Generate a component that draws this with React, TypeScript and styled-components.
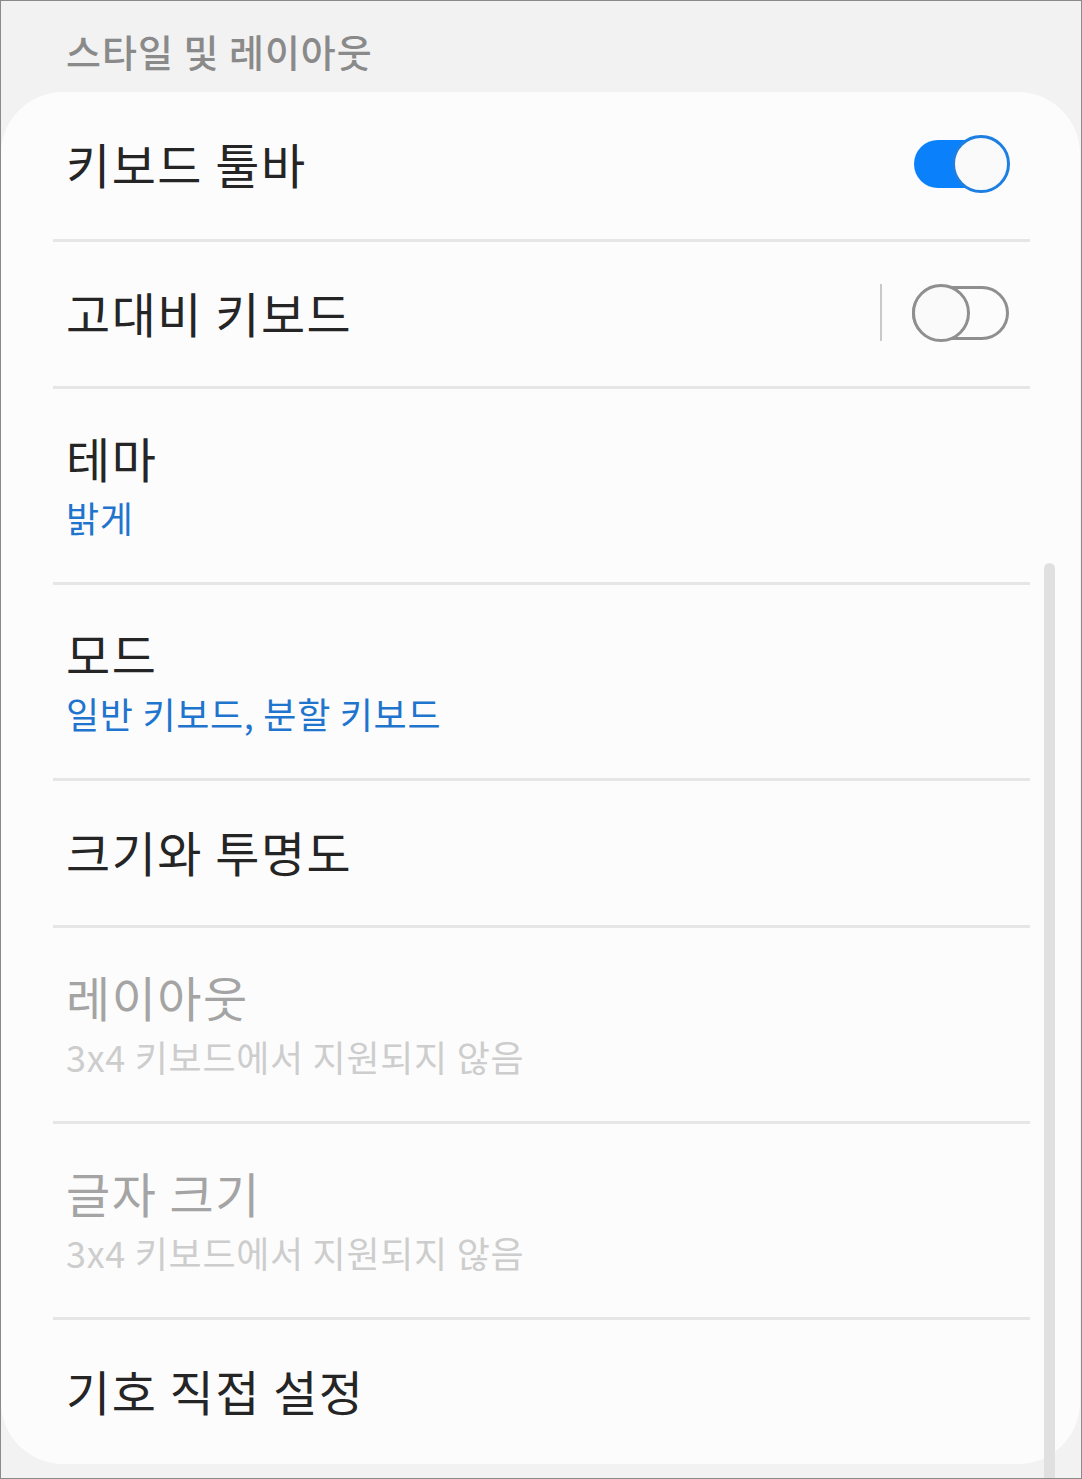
import React from 'react';
import styled, { createGlobalStyle } from 'styled-components';

interface SettingItem {
    title: string;
    subtitle?: string;
    disabled?: boolean;
    toggle?: 'on' | 'off';
    first?: boolean;
}

const items: SettingItem[] = [
    { title: '키보드 툴바', toggle: 'on', first: true },
    { title: '고대비 키보드', toggle: 'off' },
    { title: '테마', subtitle: '밝게' },
    { title: '모드', subtitle: '일반 키보드, 분할 키보드' },
    { title: '크기와 투명도' },
    { title: '레이아웃', subtitle: '3x4 키보드에서 지원되지 않음', disabled: true },
    { title: '글자 크기', subtitle: '3x4 키보드에서 지원되지 않음', disabled: true },
    { title: '기호 직접 설정' }
];

export default function App() {
    return (
        <>
            <GlobalStyle />
            <Screen>
                <SectionHeader>스타일 및 레이아웃</SectionHeader>
                <Card>
                    {items.map((item, i) => (
                        <React.Fragment key={item.title}>
                            {i > 0 && <Divider />}
                            <Row $double={!!item.subtitle} $first={item.first}>
                                <TextBlock>
                                    <Title $disabled={item.disabled}>{item.title}</Title>
                                    {item.subtitle && (
                                        <Subtitle $disabled={item.disabled}>{item.subtitle}</Subtitle>
                                    )}
                                </TextBlock>
                                {item.toggle === 'on' && (
                                    <SwitchOn>
                                        <OnTrack />
                                        <OnThumb />
                                    </SwitchOn>
                                )}
                                {item.toggle === 'off' && (
                                    <SwitchGroup>
                                        <VerticalRule />
                                        <SwitchOff>
                                            <OffThumb />
                                        </SwitchOff>
                                    </SwitchGroup>
                                )}
                            </Row>
                        </React.Fragment>
                    ))}
                </Card>
                <ScrollThumb />
            </Screen>
        </>
    );
}

const GlobalStyle = createGlobalStyle`
    html, body {
        margin: 0;
        padding: 0;
        background: #f2f2f2;
    }
    * {
        box-sizing: border-box;
    }
`;

const Screen = styled.div`
    position: relative;
    width: 1082px;
    height: 1479px;
    overflow: hidden;
    background: #f2f2f2;
    border: 1px solid #8a8a8a;
    font-family: "Noto Sans CJK KR", "Noto Sans", sans-serif;
    display: flex;
    flex-direction: column;
`;

const SectionHeader = styled.div`
    height: 91px;
    padding: 8px 0 0 65px;
    display: flex;
    align-items: center;
    font-size: 38px;
    letter-spacing: 1px;
    font-weight: 500;
    color: #8a8a8a;
`;

const Card = styled.div`
    width: 1079px;
    height: 1372px;
    background: #fcfcfc;
    border-radius: 62px;
    display: flex;
    flex-direction: column;
    overflow: hidden;
`;

const Row = styled.div<{ $double: boolean; $first?: boolean }>`
    height: ${p => (p.$double ? 193 : p.$first ? 147 : 144)}px;
    padding: 0 70px 0 65px;
    display: flex;
    align-items: center;
    justify-content: space-between;
    flex-shrink: 0;
`;

const Divider = styled.div`
    height: 3px;
    margin: 0 50px 0 52px;
    background: #e6e6e6;
    flex-shrink: 0;
`;

const TextBlock = styled.div`
    display: flex;
    flex-direction: column;
    padding-bottom: 5px;
`;

const Title = styled.div<{ $disabled?: boolean }>`
    font-size: 48px;
    letter-spacing: 1.5px;
    line-height: 60px;
    color: ${p => (p.$disabled ? '#a4a4a4' : '#252525')};
    white-space: nowrap;
`;

const Subtitle = styled.div<{ $disabled?: boolean }>`
    margin-top: 8px;
    font-size: 36px;
    letter-spacing: 0.7px;
    line-height: 44px;
    color: ${p => (p.$disabled ? '#cdcdcd' : '#1f74cd')};
    white-space: nowrap;
`;

const SwitchOn = styled.div`
    position: relative;
    width: 96px;
    height: 58px;
    margin-top: -3px;
`;

const OnTrack = styled.div`
    position: absolute;
    left: 0;
    top: 5px;
    width: 86px;
    height: 48px;
    border-radius: 24px;
    background: #0a80fb;
`;

const OnThumb = styled.div`
    position: absolute;
    right: 0;
    top: 0;
    width: 58px;
    height: 58px;
    border-radius: 50%;
    background: #fafafa;
    border: 3px solid #1d7fe2;
`;

const SwitchGroup = styled.div`
    display: flex;
    align-items: center;
    gap: 30px;
    margin-top: -3px;
    margin-right: 1px;
`;

const VerticalRule = styled.div`
    width: 2px;
    height: 57px;
    background: #c9c9c9;
`;

const SwitchOff = styled.div`
    position: relative;
    width: 97px;
    height: 54px;
    border-radius: 27px;
    border: 3px solid #8f8f8f;
`;

const OffThumb = styled.div`
    position: absolute;
    left: -3px;
    top: -5px;
    width: 58px;
    height: 58px;
    border-radius: 50%;
    background: #fafafa;
    border: 3px solid #8f8f8f;
`;

const ScrollThumb = styled.div`
    position: absolute;
    left: 1043px;
    top: 562px;
    bottom: 0;
    width: 11px;
    border-radius: 6px 6px 0 0;
    background: #e0e0e0;
`;
